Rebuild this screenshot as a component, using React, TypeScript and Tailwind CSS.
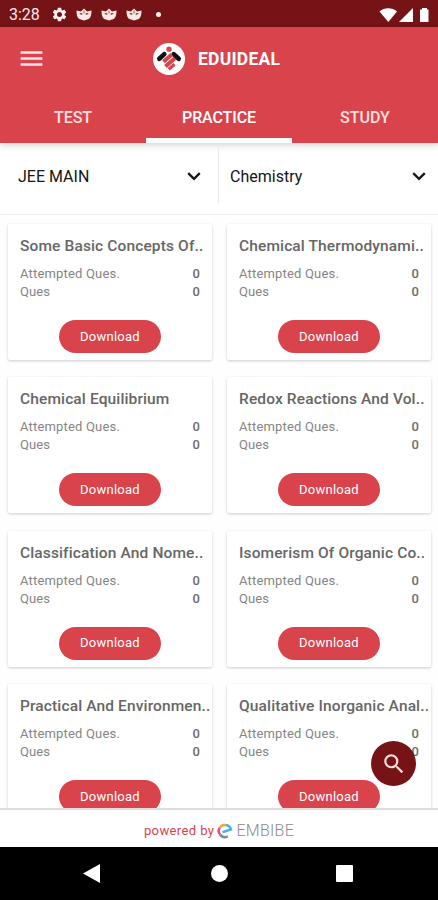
import { MdMenu, MdSettings, MdSearch } from "react-icons/md";

const topics = [
  "Some Basic Concepts Of..",
  "Chemical Thermodynami..",
  "Chemical Equilibrium",
  "Redox Reactions And Vol..",
  "Classification And Nome..",
  "Isomerism Of Organic Co..",
  "Practical And Environmen..",
  "Qualitative Inorganic Anal..",
];

function MaskIcon() {
  return (
    <svg className="h-[13px] w-4" viewBox="0 0 16 13">
      <path fill="#fbe9e7" d="M.5 2.500 5 3.500 8 .5l3 3 4.500-1c0 5.500-1.400 8.500-4.500 9l-3 1-3-1C1.900 11 .5 8 .5 2.500Z" />
      <path fill="#8d3a3b" d="M3.400 5 6.300 5.300 6.300 6.800C4.800 6.900 3.800 6.300 3.400 5Zm9.200 0-2.900.3v1.500c1.500.1 2.500-.5 2.900-1.800ZM7.600 2.500h.8v3h-.8Z" />
    </svg>
  );
}

function StatusBar() {
  return (
    <div className="flex h-[27px] shrink-0 items-center bg-[#761317] pl-[9px] pr-[8px] pt-[2px] text-white">
      <span className="w-[42px] text-[16px] leading-5 text-[#fbe9e7]">3:28</span>
      <MdSettings className="mr-2 size-[17px] text-[#fff3f0]" />
      <div className="flex gap-[9px]">
        <MaskIcon />
        <MaskIcon />
        <MaskIcon />
      </div>
      <span className="ml-[14px] size-[5px] rounded-full bg-[#fff3f0]" />
      <svg className="ml-auto h-[16px] w-[51px]" viewBox="0 0 51 16" fill="#fff">
        <path d="M.5 4.500C5.500.2 13 .2 18 4.500L9.300 15Z" />
        <path d="M34 1v14H20Z" />
        <path d="M43 1h5v1.500h1.500V15H41V2.500h2Z" />
      </svg>
    </div>
  );
}

function Logo() {
  return (
    <svg className="size-8" viewBox="0 0 32 32">
      <circle cx="16" cy="16" r="16" fill="#fff" />
      <circle cx="16" cy="6.200" r="2.600" fill="#d9434c" />
      <g fill="none">
        <path stroke="#111" strokeLinecap="round" strokeWidth="4.600" d="m6.300 15.800 5-4.700M20.700 11.100l5 4.700" />
        <path stroke="#d9434c" strokeWidth="4" d="m10.500 18.700 8.200-7.200M12.500 23.500l9.300-8.200" />
        <path stroke="#d9434c" strokeWidth="3.200" d="m15.800 26.200 5.700-5" />
      </g>
    </svg>
  );
}

function Select({ label, className }: { label: string; className: string }) {
  return (
    <div className={`flex items-center justify-between ${className}`}>
      <span className="pt-[2px]">{label}</span>
      <svg className="h-[9px] w-[14px]" viewBox="0 0 14 9" fill="none" stroke="currentColor" strokeWidth="2.300">
        <path d="m1.200 1.200 5.800 5.600 5.800-5.600" />
      </svg>
    </div>
  );
}

function TopicCard({ title }: { title: string }) {
  return (
    <article className="flex h-[136px] w-[204px] flex-col rounded-[2px] bg-white px-[12px] pt-[12px] shadow-[0_1px_3px_rgba(0,0,0,0.2)]">
      <h2 className="whitespace-nowrap text-[15.500px] font-medium leading-[20px] tracking-[0.130px] text-[#666]">{title}</h2>
      <dl className="mt-[9px] text-[13px] leading-[18px] text-[#858585]">
        <div className="flex justify-between">
          <dt className="tracking-[0.180px]">Attempted Ques.</dt>
          <dd className="font-medium text-[#6c6c6c]">0</dd>
        </div>
        <div className="flex justify-between">
          <dt className="tracking-[0.100px]">Ques</dt>
          <dd className="font-medium text-[#6c6c6c]">0</dd>
        </div>
      </dl>
      <button className="ml-[39px] mt-[19px] h-[33px] w-[102px] rounded-full bg-[#d9434c] text-[13px] tracking-[0.250px] text-white">Download</button>
    </article>
  );
}

export default function App() {
  return (
    <div className="relative flex h-[900px] w-[438px] flex-col overflow-hidden bg-white font-['Roboto',sans-serif]">
      <StatusBar />
      <header className="relative z-10 h-[116px] shrink-0 bg-[#d9434c] text-white shadow-[0_2px_7px_rgba(0,0,0,0.18)]">
        <div className="flex h-[63px] items-center pl-[17px]">
          <MdMenu className="size-[29px] text-[#ffe5e3]" />
          <div className="ml-[107px]"><Logo /></div>
          <h1 className="ml-[13px] pt-[2px] text-[17.500px] font-bold tracking-[0.250px]">EDUIDEAL</h1>
        </div>
        <nav className="grid h-[53px] grid-cols-3 text-[16px] font-medium">
          <button className="pt-[2px] text-[#ffe0df]">TEST</button>
          <button className="border-b-[5px] border-white pt-[7px] tracking-[-0.100px]">PRACTICE</button>
          <button className="pt-[2px] text-[#ffe0df]">STUDY</button>
        </nav>
      </header>
      <section className="flex h-[72px] shrink-0 items-start border-b border-[#eee] pt-[6px] text-[16px] text-[#151515]">
        <Select label="JEE MAIN" className="h-[54px] w-[219px] border-r border-[#e8e8e8] pl-[18px] pr-[17px]" />
        <Select label="Chemistry" className="h-[54px] w-[219px] pl-[11px] pr-[12px]" />
      </section>
      <main className="min-h-0 flex-1 overflow-hidden bg-[#fefefe] pl-[8px] pt-[9px]">
        <div className="grid grid-cols-[204px_204px] gap-x-[15px] gap-y-[17.300px]">
          {topics.map((title) => <TopicCard key={title} title={title} />)}
        </div>
      </main>
      <footer className="flex h-[39px] shrink-0 items-center justify-center border-t-2 border-[#ddd] pt-[4px] text-[13px]">
        <span className="tracking-[0.400px] text-[#d9434c]">powered by</span>
        <svg className="ml-[3px] size-4" viewBox="0 0 16 16" fill="none" strokeWidth="2.500">
          <path stroke="#e84b83" d="M3.200 11.500C1.500 9.500 1.300 6.700 2.800 4.700" />
          <path stroke="#f5a623" d="M2.800 4.700C4.200 2.300 6.500 1.700 9 2" />
          <path stroke="#43b4e4" d="M9 2c2.800.6 4.500 2.300 4.900 4.500L5.500 9.200" />
          <path stroke="#888" d="M3.200 11.500c1.700 2.500 4.500 3.300 7.600 2" />
        </svg>
        <span className="ml-[3px] text-[16px] font-light tracking-[0.300px] text-[#8b8b8b]">EMBIBE</span>
      </footer>
      <nav className="flex h-[53px] shrink-0 items-center bg-black pl-[83px]">
        <svg className="h-[19px] w-[17px]" viewBox="0 0 17 19"><path d="M17 0v19L0 9.500Z" fill="#fff" /></svg>
        <span className="ml-[111px] size-[17px] rounded-full bg-white" />
        <span className="ml-[108px] size-[17px] rounded-[1px] bg-white" />
      </nav>
      <button className="absolute left-[371px] top-[741px] z-20 grid size-[45px] place-items-center rounded-full bg-[#761317] text-[#ffdcda]">
        <MdSearch className="size-[26px]" />
      </button>
    </div>
  );
}
